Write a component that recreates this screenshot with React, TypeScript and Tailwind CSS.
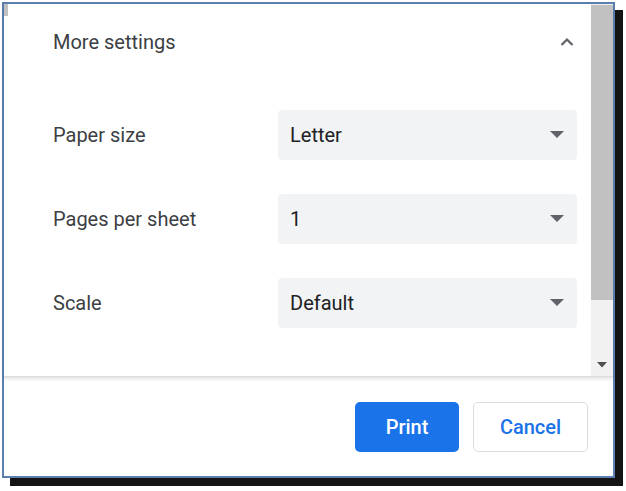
export default function App() {
  const rows = [
    { label: 'Paper size', value: 'Letter' },
    { label: 'Pages per sheet', value: '1' },
    { label: 'Scale', value: 'Default' },
  ];
  return (
    <div className="w-[626px] h-[491px] bg-white pl-[2px] pt-[2px]" style={{ fontFamily: 'Roboto, "Liberation Sans", sans-serif' }}>
      <div className="w-[613px] h-[476px] border-2 border-[#5b7fb0] shadow-[8px_8px_0_#141414] bg-white flex flex-col">
        <div className="flex h-[373px] border-b border-[#dadce0] shadow-[0_2px_3px_rgba(0,0,0,0.12)]">
          <div className="w-[4px] flex flex-col"><div className="h-[12px] bg-[#c1c1c1]" /></div>
          <div className="flex-1 pl-[45px] pr-[14px]">
            <div className="flex items-center justify-between h-[76px] pb-[1px]">
              <span className="text-[20px] text-[#3c4043]">More settings</span>
              <svg width="16" height="16" viewBox="0 0 16 16" className="mr-[2px]"><path d="M2.5 11 L8 5.5 L13.5 11" fill="none" stroke="#5f6368" strokeWidth="2.2" /></svg>
            </div>
            <div className="flex flex-col gap-[34px] pt-[30px]">
              {rows.map(r => (
                <div key={r.label} className="flex items-center h-[50px]">
                  <span className="w-[225px] text-[20px] text-[#3c4043]">{r.label}</span>
                  <div className="flex-1 h-[50px] rounded-[4px] bg-[#f1f3f4] flex items-center justify-between pl-[12px] pr-[13px]">
                    <span className="text-[20px] text-[#202124]">{r.value}</span>
                    <svg width="14" height="8" viewBox="0 0 14 8"><path d="M0 0 H14 L7 7 Z" fill="#5f6368" /></svg>
                  </div>
                </div>
              ))}
            </div>
          </div>
          <div className="w-[22px] bg-[#f1f1f1] flex flex-col">
            <div className="h-[295px] mt-[1px] bg-[#c1c1c1]" />
            <div className="flex-1" />
            <div className="h-[22px] flex items-center justify-center">
              <svg width="10" height="6" viewBox="0 0 10 6"><path d="M0 0 H10 L5 5.5 Z" fill="#505050" /></svg>
            </div>
          </div>
        </div>
        <div className="flex-1 flex items-center justify-end gap-[14px] pr-[25px]">
          <button className="w-[104px] h-[50px] rounded-[5px] bg-[#1a73e8] text-white text-[20px] font-medium">Print</button>
          <button className="w-[115px] h-[50px] rounded-[5px] border border-[#dadce0] bg-white text-[#1a73e8] text-[20px] font-medium">Cancel</button>
        </div>
      </div>
    </div>
  );
}
